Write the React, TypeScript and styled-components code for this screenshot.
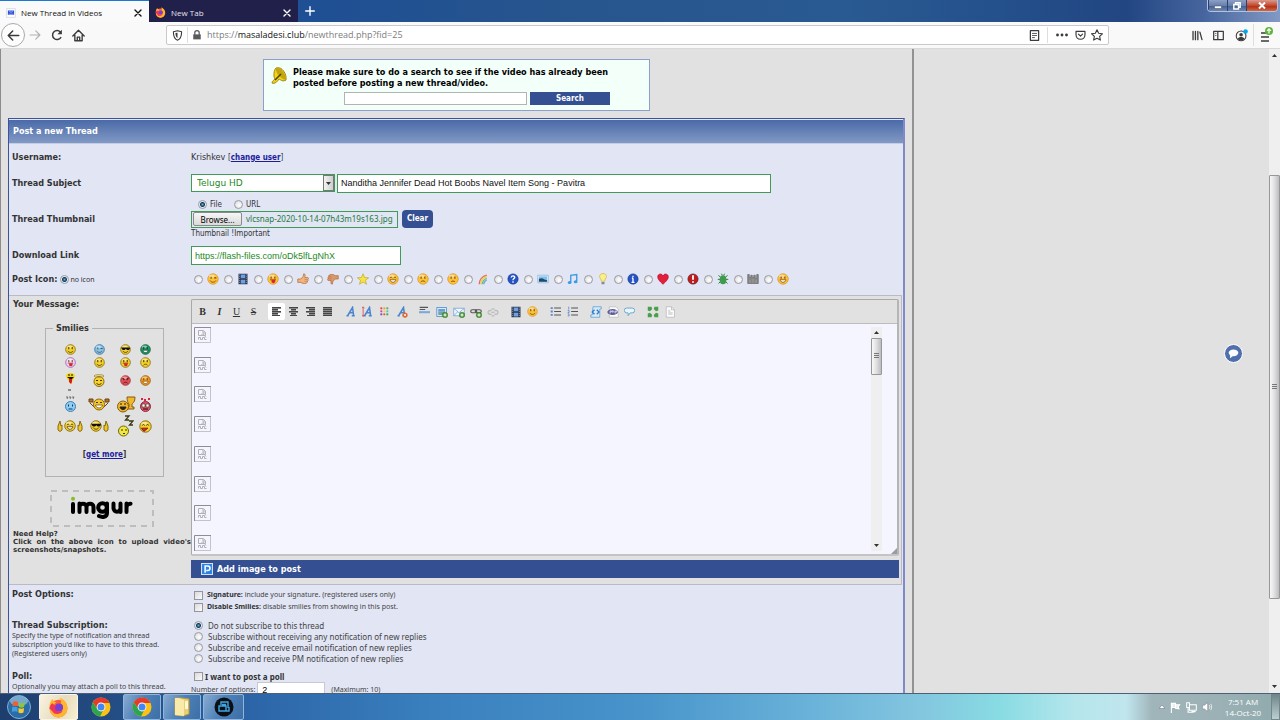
import React from "react";
import styled, { createGlobalStyle, css } from "styled-components";

const verdana = `"DejaVu Sans Condensed", "DejaVu Sans", sans-serif`;
const tahoma = `"Noto Sans", "Open Sans", sans-serif`;
const arial = `"Liberation Sans", Arial, sans-serif`;
const segoe = `"Open Sans", "Noto Sans", sans-serif`;

const GlobalStyle = createGlobalStyle`
  *, *::before, *::after { box-sizing: border-box; }
  body { margin: 0; background: #e1e1e1; }
  button, input, select { font: inherit; margin: 0; }
  svg { display: block; flex: none; }
`;

/* ---------- window frame ---------- */

const Shell = styled.div`
  display: flex;
  flex-direction: column;
  height: 100vh;
  font: 9px/11px ${verdana};
  color: #333;
`;

const TabBar = styled.header`
  flex: none;
  display: flex;
  height: 22px;
  background: linear-gradient(90deg, #22549a 0%, #1f4f94 24%, #27558d 45%, #2a5a92 66%, #24508b 78%, #224682 88%, #46659f 94%, #8299c4 100%);
`;

const Tab = styled.div<{ $active?: boolean }>`
  display: flex;
  align-items: center;
  gap: 5px;
  flex: 0 0 149px;
  padding: 2px 7px 0 6px;
  font: 8px/12px ${segoe};
  color: ${(p) => (p.$active ? "#111" : "#e4e4ee")};
  background: ${(p) => (p.$active ? "#fafafa" : "#21204a")};
  border-top: ${(p) => (p.$active ? "1px solid #1b78d6" : "1px solid #21204a")};
`;

const TabTitle = styled.span`
  flex: 1;
`;

const IconButton = styled.button<{ $w?: number; $color?: string }>`
  display: flex;
  align-items: center;
  justify-content: center;
  flex: none;
  width: ${(p) => p.$w ?? 18}px;
  padding: 0;
  border: 0;
  background: none;
  color: ${(p) => p.$color ?? "#3b3b3d"};
`;

const WindowButtons = styled.div`
  display: flex;
  margin-left: auto;
  margin-right: 2px;
  height: 12px;
  border: 1px solid #b4c3dd;
  border-top: 0;
  border-radius: 0 0 4px 4px;
  overflow: hidden;
`;

const WindowButton = styled.button<{ $close?: boolean }>`
  display: flex;
  align-items: center;
  justify-content: center;
  width: ${(p) => (p.$close ? 31 : 19)}px;
  padding: 0;
  border: 0;
  border-left: 1px solid #2b406c;
  color: #fff;
  background: ${(p) =>
    p.$close
      ? "linear-gradient(#d99a8c, #c4472f 50%, #b53317 60%, #cf6a45)"
      : "linear-gradient(#8d9fc3, #6680b0 50%, #44608f 55%, #6d87b4)"};
`;

const NavBar = styled.nav`
  flex: none;
  display: flex;
  align-items: center;
  height: 27px;
  padding: 0 2px 0 1px;
  background: #f9f9fa;
  border-bottom: 1px solid #d8d8da;
`;

const BackButton = styled(IconButton)`
  height: 24px;
  border: 1px solid #a9a9ab;
  border-radius: 50%;
  background: #fdfdfd;
`;

const NavGroup = styled.div<{ $gap?: number }>`
  display: flex;
  align-items: center;
  gap: ${(p) => p.$gap ?? 0}px;
`;

const AddressBar = styled.div`
  display: flex;
  align-items: center;
  flex: 1;
  height: 20px;
  margin: 0 77px;
  background: #fff;
  border: 1px solid #c9c9cc;
  border-radius: 2px;
`;

const Separator = styled.span<{ $h?: number }>`
  width: 1px;
  height: ${(p) => p.$h ?? 16}px;
  background: #dededf;
`;

const Url = styled.span`
  flex: 1;
  padding-left: 2px;
  font: 9px/14px ${segoe};
  color: #7c7c80;
  b { font-weight: 400; color: #111; }
`;

/* ---------- page ---------- */

const Viewport = styled.div`
  flex: 1;
  min-height: 0;
  display: flex;
  overflow: hidden;
  position: relative;
  background: #e1e1e1;
`;

const Site = styled.main`
  flex: 0 0 71.4%;
  padding: 10px 7px 0 7px;
  border-left: 1px solid #8f8b8d;
  border-right: 2px solid #929292;
`;

const Notice = styled.form`
  width: 387px;
  height: 52px;
  margin: 0 auto 7px;
  padding: 7px 7px 0;
  display: grid;
  grid-template-columns: 22px 1fr;
  align-content: start;
  row-gap: 3px;
  background: #f3fff9;
  border: 1px solid #8ba0cd;
  color: #000;
  font: bold 9px/11px ${verdana};
`;

const SearchLine = styled.div`
  grid-column: 1 / -1;
  display: flex;
  justify-content: center;
  gap: 3px;
  padding-left: 41px;
`;

const SearchInput = styled.input`
  width: 183px;
  height: 13px;
  border: 1px solid #b3b3b3;
  background: #fff;
`;

const SearchButton = styled.button`
  width: 80px;
  height: 13px;
  padding: 0;
  border: 0;
  background: #344f92;
  color: #fff;
  font: bold 8px/12px ${verdana};
`;

const ThreadForm = styled.form`
  border: 1px solid #3e53a0;
  border-width: 1px 2px 0 1px;
  border-right-color: #7f8ac6;
  background: #e1e5f4;
`;

const FormHeader = styled.h1`
  margin: 1px 0 0;
  height: 24px;
  padding: 0 4px;
  color: #fff;
  font: bold 9px/23px ${verdana};
  background: linear-gradient(#4a6aa8, #8299c4);
  border-bottom: 1px solid #c3cde4;
`;

const Row = styled.div<{ $h: number; $top?: boolean }>`
  display: grid;
  grid-template-columns: 179px 1fr;
  align-items: ${(p) => (p.$top ? "start" : "center")};
  min-height: ${(p) => p.$h}px;
  padding: ${(p) => (p.$top ? "4px 0 0 3px" : "0 0 0 3px")};
`;

const Label = styled.label`
  font-weight: bold;
`;

const Hint = styled.p`
  margin: 0;
  font: 7px/9px ${tahoma};
  color: #444;
`;

const Link = styled.a`
  color: #1d1d9c;
  font-weight: bold;
  text-decoration: underline;
`;

const Inline = styled.div<{ $gap?: number }>`
  display: flex;
  align-items: center;
  gap: ${(p) => p.$gap ?? 3}px;
`;

const SourceChoice = styled(Inline)`
  padding-left: 7px;
`;

const Small = styled.span`
  font-size: 8px;
`;

const Tiny = styled.span`
  font: 7px/11px ${tahoma};
`;

const green = css`
  border: 1px solid #3f9b57;
  background: #fff;
  color: #1c8a1c;
`;

const SelectBox = styled.div`
  position: relative;
  width: 144px;
`;

const PrefixSelect = styled.select`
  ${green}
  appearance: none;
  display: block;
  width: 100%;
  height: 18px;
  padding: 0 5px;
  border-radius: 0;
  font: 9px/14px "DejaVu Sans", sans-serif;
`;

const SelectArrow = styled.span`
  position: absolute;
  top: 1px;
  right: 1px;
  bottom: 1px;
  width: 11px;
  display: flex;
  align-items: center;
  justify-content: center;
  border: 1px solid #777;
  background: linear-gradient(90deg, #f2f2f2, #cfcfcf);
  pointer-events: none;
`;

const TextField = styled.input<{ $w: number; $dark?: boolean }>`
  ${green}
  width: ${(p) => p.$w}px;
  height: 19px;
  padding: 0 3px;
  font: 9px/12px ${arial};
  ${(p) => p.$dark && "color: #111;"}
`;

const FilePicker = styled.div`
  display: flex;
  align-items: center;
  gap: 4px;
  width: 207px;
  height: 17px;
  padding-left: 1px;
  white-space: nowrap;
  border: 1px solid #3f9b57;
  color: #1c7a3c;
  font: 8px/12px ${tahoma};
`;

const BrowseButton = styled.button`
  flex: none;
  width: 49px;
  height: 14px;
  padding: 0;
  border: 1px solid #8b8b8b;
  border-radius: 2px;
  background: linear-gradient(#f6f6f6, #dadada);
  color: #000;
  font: 8px/11px ${tahoma};
`;

const ClearButton = styled.button`
  width: 31px;
  height: 18px;
  padding: 0;
  border: 0;
  border-radius: 4px;
  background: #344f92;
  color: #fff;
  font: bold 8px/12px ${verdana};
`;

const Radio = styled.input.attrs({ type: "radio" })`
  appearance: none;
  flex: none;
  width: 9px;
  height: 9px;
  border: 1px solid #9a9ca2;
  border-radius: 50%;
  background: radial-gradient(circle at 60% 60%, #fff, #d5d5d7);
  &:checked {
    background: radial-gradient(circle, #58b4de 0, #12395c 2px, #e8ecf0 3px);
  }
`;

const Checkbox = styled.input.attrs({ type: "checkbox" })`
  appearance: none;
  flex: none;
  width: 9px;
  height: 9px;
  border: 1px solid #94969c;
  background: linear-gradient(135deg, #dadada, #fbfbfb);
`;

const IconPicks = styled.div`
  display: flex;
  padding-left: 3px;
`;

const IconPick = styled.label`
  display: flex;
  align-items: center;
  gap: 4px;
  width: 30px;
`;

/* ---------- message area ---------- */

const MessageRow = styled.section`
  display: grid;
  grid-template-columns: 178px 1fr;
  min-height: 290px;
  padding: 3px 2px 5px 4px;
  margin: 6px 1px 0 0;
  background: #e1e1e1;
  border: 1px solid #b9bac6;
  border-left: 0;
`;

const Side = styled.div`
  display: flex;
  flex-direction: column;
`;

const SmilieSet = styled.fieldset`
  width: 119px;
  height: 154px;
  margin: 13px 0 0 32px;
  padding: 9px 0 0 7px;
  border: 1px solid #b2b2b2;
  legend {
    padding: 0 3px;
    font-weight: bold;
  }
`;

const SmilieGrid = styled.div`
  display: grid;
  grid-template-columns: 34px 24px 29px 11px;
  grid-template-rows: 13px 13px 23px 24px 20px;
  place-items: center;
`;

const GetMore = styled.p`
  margin: 13px 7px 0 0;
  text-align: center;
  font-size: 8px;
`;

const Imgur = styled.a`
  display: flex;
  width: 104px;
  height: 37px;
  margin: 13px 0 3px 37px;
  color: #000;
`;

const Help = styled.p`
  margin: 0;
  width: 178px;
  font: bold 7px/8px "DejaVu Sans", sans-serif;
  text-align: justify;
`;

const Work = styled.div`
  display: flex;
  flex-direction: column;
  gap: 4px;
`;

const Editor = styled.div`
  position: relative;
  border: 1px solid #a9a9a9;
  border-right: 2px solid #b5b5b5;
  border-bottom: 2px solid #c4c4c4;
  border-radius: 2px;
`;

const Toolbar = styled.div`
  display: flex;
  align-items: center;
  gap: 6px;
  height: 24px;
  padding-left: 2px;
  border-bottom: 1px solid #bcbcbc;
`;

const ToolGroup = styled.div`
  display: flex;
`;

const Tool = styled.button<{ $on?: boolean }>`
  display: flex;
  align-items: center;
  justify-content: center;
  width: 17px;
  height: 17px;
  padding: 0;
  border: 0;
  border-radius: 2px;
  background: ${(p) => (p.$on ? "#fff" : "none")};
  color: #333;
  font: bold 10px/12px "Liberation Serif", serif;
  u, s { font-weight: 400; }
`;

const Canvas = styled.div`
  display: flex;
  justify-content: space-between;
  height: 230px;
  padding: 3px 15px 3px 2px;
  background: #f5f5ff;
`;

const Placeholders = styled.div`
  display: flex;
  flex-direction: column;
  justify-content: space-between;
`;

const Grip = styled.span`
  position: absolute;
  right: 0;
  bottom: 0;
`;

const ScrollTrack = styled.div<{ $w: number }>`
  flex: none;
  display: flex;
  flex-direction: column;
  align-items: center;
  width: ${(p) => p.$w}px;
  background: #efefef;
`;

const ScrollArrow = styled.span<{ $h?: number }>`
  display: flex;
  align-items: center;
  height: ${(p) => p.$h ?? 11}px;
`;

const ScrollSpace = styled.span<{ $grow: number }>`
  flex: ${(p) => p.$grow} 1 0;
`;

const ScrollThumb = styled.span<{ $grow: number }>`
  flex: ${(p) => p.$grow} 1 0;
  display: flex;
  align-items: center;
  justify-content: center;
  width: 100%;
  border: 1px solid #979797;
  border-radius: 1px;
  background: linear-gradient(90deg, #f8f8f8, #e2e2e4 45%, #bdbdc1);
`;

const AddImage = styled.button`
  display: flex;
  align-items: center;
  gap: 4px;
  height: 18px;
  padding: 0 10px;
  border: 0;
  background: #344f92;
  color: #fff;
  font: bold 9px/12px ${verdana};
`;

/* ---------- options ---------- */

const OptionList = styled.div`
  display: flex;
  flex-direction: column;
  padding-left: 3px;
`;

const Option = styled.label<{ $small?: boolean }>`
  display: flex;
  align-items: center;
  gap: ${(p) => (p.$small ? 4 : 5)}px;
  height: ${(p) => (p.$small ? 12 : 11)}px;
  font: ${(p) => (p.$small ? `7px/12px ${tahoma}` : `8px/11px ${tahoma}`)};
  color: #444;
  b { color: #333; }
`;

const PollOption = styled(Option)`
  gap: 2px;
  font: 8px/12px ${tahoma};
`;

const PollCount = styled.div`
  display: flex;
  align-items: flex-start;
  gap: 2px;
  font: 7px/15px ${tahoma};
  color: #444;
  input {
    width: 68px;
    height: 16px;
    padding: 0 4px;
    border: 1px solid #c8c8d0;
    background: #fff;
    font: 9px/14px ${arial};
  }
  span { padding-left: 4px; }
`;

const ChatButton = styled.button`
  position: absolute;
  right: 37px;
  top: 295px;
  display: flex;
  align-items: center;
  justify-content: center;
  width: 19px;
  height: 19px;
  padding: 0;
  border: 1px solid #fff;
  border-radius: 50%;
  background: #4f70ad;
`;

const Spacer = styled.div`
  flex: 1;
`;

/* ---------- task bar ---------- */

const TaskBar = styled.footer`
  flex: none;
  display: flex;
  align-items: stretch;
  height: 27px;
  padding-left: 1px;
  border-top: 1px solid #4c6176;
  background: linear-gradient(90deg, #1e3e6d 0%, #25528c 12%, #2c66a9 20%, #3a80bf 34%, #4894cb 50%, #66afd8 62%, #83c6df 72%, #88dbe3 78%, #b5e6ec 84%, #c0e5ed 88%, #a0b5ba 90%, #9bb1b5 95%, #90aaae 100%);
`;

const TaskButton = styled.button<{ $w: number; $kind?: "active" | "open" }>`
  display: flex;
  align-items: center;
  justify-content: center;
  width: ${(p) => p.$w}px;
  margin-right: 2px;
  padding: 0;
  border: 1px solid transparent;
  border-radius: 2px;
  background: none;
  ${(p) =>
    p.$kind === "active" &&
    "background: linear-gradient(115deg, #faf3de, #e6dcc0 55%, #f7efd0); border-color: #f8f5e8;"}
  ${(p) =>
    p.$kind === "open" &&
    "background: linear-gradient(115deg, #88aad0, #4f82b8 45%, #3d6fa6); border-color: #8fb6dd;"}
`;

const Tray = styled.div`
  display: flex;
  align-items: center;
  gap: 5px;
  margin-left: auto;
`;

const Clock = styled.time`
  width: 46px;
  margin-left: 3px;
  color: #fff;
  text-align: center;
  font: 8px/11px ${segoe};
`;

const ShowDesktop = styled.button`
  align-self: stretch;
  width: 9px;
  padding: 0;
  border: 1px solid #71878c;
  background: linear-gradient(#6f878b, #bccfd0);
`;

/* ---------- drawings ---------- */

type IconProps = { w?: number; h?: number; box?: string; children: React.ReactNode };

const Svg = ({ w = 12, h, box = "0 0 16 16", children }: IconProps) => (
  <svg width={w} height={h ?? w} viewBox={box} fill="none" aria-hidden="true">
    {children}
  </svg>
);

const Line = ({ d, sw = 1.6, c = "currentColor", fill = "none" }: { d: string; sw?: number; c?: string; fill?: string }) => (
  <path d={d} stroke={c} strokeWidth={sw} fill={fill} strokeLinecap="round" strokeLinejoin="round" />
);

const Arrow = ({ up }: { up?: boolean }) => (
  <Svg w={5} h={3} box="0 0 5 3">
    <path d={up ? "M0 3 2.500 0 5 3Z" : "M0 0h5L2.500 3Z"} fill="#333" />
  </Svg>
);

const ThumbLines = () => (
  <Svg w={5} h={6} box="0 0 5 6">
    <path d="M0 .5h5M0 2.500h5M0 4.500h5" stroke="#777" />
  </Svg>
);

const Face = ({ mood, fill = "#fbc23a", edge = "#e0a03a", ink = "#7a4a10", size = 12 }: { mood: string; fill?: string; edge?: string; ink?: string; size?: number }) => (
  <Svg w={size}>
    <circle cx="8" cy="8" r="7" fill={fill} stroke={edge} strokeWidth="1.200" />
    <ellipse cx="6.500" cy="4" rx="4" ry="2" fill="#fff" opacity=".45" />
    {mood === "cool" ? (
      <path d="M1.500 5h13v1.500c-1 3-4.500 3-6 .5-1.500 2.500-5 2.500-6-.5Z" fill="#111" />
    ) : mood === "happy" || mood === "scrunch" ? (
      <path d="m4 7 1.500-2L7 7m2 0 1.500-2L12 7" stroke={ink} />
    ) : mood === "angry" ? (
      <path d="m3.500 4.500 3 2m6-2-3 2M5 7h1m4 0h1" stroke={ink} strokeWidth="1.500" />
    ) : (
      <path d={mood === "wink" ? "M5.500 5v2.500M9.500 6.500h3" : "M5.500 4.500v3M10.500 4.500v3"} stroke={ink} strokeWidth="1.500" />
    )}
    {(mood === "smile" || mood === "wink" || mood === "cool") && <path d="M4 10c2 3 6 3 8 0" stroke={ink} strokeWidth="1.200" />}
    {(mood === "sad" || mood === "angry") && <path d="M5 12c1.500-2 4.500-2 6 0" stroke={ink} strokeWidth="1.200" />}
    {mood === "flat" && <path d="M5.500 11.500c1.500-1 3.500-1 5 0" stroke={ink} strokeWidth="1.200" />}
    {(mood === "grin" || mood === "happy") && <path d="M4 9h8c-1 4.500-7 4.500-8 0Z" fill="#fff" stroke={ink} />}
    {mood === "tongue" && (
      <>
        <path d="M4 9h8" stroke={ink} />
        <path d="M6 9h5v3c-1 2-4 2-5 0Z" fill="#dd2233" />
      </>
    )}
    {mood === "scrunch" && <path d="M3 10h8l-5 4Z" fill="#dd2233" stroke="#7b1111" />}
  </Svg>
);

const Badge = ({ fill, kind }: { fill: string; kind: "q" | "i" | "x" }) => (
  <Svg>
    <circle cx="8" cy="8" r="7" fill={fill} stroke="#1c2a66" strokeOpacity=".5" />
    {kind === "q" && <path d="M5.700 6c.3-3 5-2.500 4.600 0C10 7.500 8 7.500 8 9.500M8 11v2" stroke="#fff" strokeWidth="1.800" />}
    {kind === "i" && <path d="M8 3.500v2m0 1.500v5.500M6.500 7H8M6 12.500h4" stroke="#fff" strokeWidth="1.800" />}
    {kind === "x" && <path d="M8 3v6M8 11v2" stroke="#fff" strokeWidth="2.400" />}
  </Svg>
);

const Film = () => (
  <Svg>
    <path d="M2 1h12v14H2Z" fill="#29364f" />
    <path d="M5 2h6v5H5Zm0 7h6v5H5Z" fill="#6f9fe0" />
    <path d="M3.500 2v12M12.500 2v12" stroke="#b9c8e2" strokeDasharray="1 1.500" />
  </Svg>
);

const Hand = ({ down }: { down?: boolean }) => (
  <Svg>
    <g transform={down ? "rotate(180 8 8)" : undefined}>
      <path d="M1 8h4l3-3 1-4c2 0 2 2 1.500 5H14c1.500 0 1.500 2 .5 2.500.5 1 .3 2-.5 2.500.2 1-.3 2-1 2-.2 1.500-6 1.500-8-.5H1Z" fill={down ? "#d9976a" : "#f0b47c"} stroke="#b3703c" />
      <path d="M10 8.500h4M10 11h3.500" stroke="#b3703c" strokeWidth=".7" />
    </g>
  </Svg>
);

const Rainbow = () => (
  <Svg>
    <path d="M3 15C3 9 7 4 13 3" stroke="#e86a6a" strokeWidth="1.800" />
    <path d="M5 15C5 10 8 6 13 5" stroke="#f0d24a" strokeWidth="1.800" />
    <path d="M7 15c0-4 2-6 6-8" stroke="#6cc36c" strokeWidth="1.800" />
    <path d="M9 15c0-3 1-4 4-6" stroke="#6fa4e8" strokeWidth="1.800" />
  </Svg>
);

const Picture = () => (
  <Svg>
    <path d="M1 3h14v10H1Z" fill="#eaf4fc" stroke="#8ab4d6" />
    <path d="M2.500 4.500h11v7h-11Z" fill="#7fc0ea" />
    <path d="M2.500 7.500 7 7l3 1.500 3.500 1v2h-11Z" fill="#1f4a70" />
  </Svg>
);

const postIcons: { name: string; icon: React.ReactNode }[] = [
  { name: "Wink", icon: <Face mood="wink" /> },
  { name: "Video", icon: <Film /> },
  { name: "Tongue", icon: <Face mood="tongue" /> },
  { name: "Thumbs Up", icon: <Hand /> },
  { name: "Thumbs Down", icon: <Hand down /> },
  {
    name: "Star",
    icon: (
      <Svg>
        <path d="m8 1 2 5 5.500.3-4.300 3.400L12.700 15 8 12l-4.700 3 1.500-5.300L.5 6.300 6 6Z" fill="#f6e34b" stroke="#c4ad24" />
      </Svg>
    ),
  },
  { name: "Smile", icon: <Face mood="happy" /> },
  { name: "Sad", icon: <Face mood="sad" /> },
  { name: "Sick", icon: <Face mood="flat" /> },
  { name: "Rainbow", icon: <Rainbow /> },
  { name: "Question", icon: <Badge kind="q" fill="#2353c4" /> },
  { name: "Photo", icon: <Picture /> },
  {
    name: "Music",
    icon: (
      <Svg>
        <path d="M5 12V3l8-1v9" stroke="#3b9be0" strokeWidth="1.800" />
        <ellipse cx="3.500" cy="12.500" rx="2.500" ry="2" fill="#3b9be0" />
        <ellipse cx="11.500" cy="11.500" rx="2.500" ry="2" fill="#3b9be0" />
      </Svg>
    ),
  },
  {
    name: "Lightbulb",
    icon: (
      <Svg>
        <path d="M8 .7c5 0 5.500 5 3 7.300L10 11H6L5 8C2.500 5.700 3 .7 8 .7Z" fill="#fbef8c" stroke="#cfb64a" />
        <path d="M6 12h4v3H6Z" fill="#8b8b8b" />
      </Svg>
    ),
  },
  { name: "Information", icon: <Badge kind="i" fill="#2353c4" /> },
  {
    name: "Heart",
    icon: (
      <Svg>
        <path d="M8 15C3 10.500 1 8 1 5c0-4 5.500-5 7-1 1.500-4 7-3 7 1 0 3-2 5.500-7 10Z" fill="#e3203c" stroke="#b3142c" />
      </Svg>
    ),
  },
  { name: "Exclamation", icon: <Badge kind="x" fill="#c01c1c" /> },
  {
    name: "Bug",
    icon: (
      <Svg>
        <path d="m2 3 3 3m9-3-3 3M1 8.500h4m10 0h-4M2 14l3-3m9 3-3-3M6 1l1 2m3-2L9 3" stroke="#2a7a38" strokeWidth="1.300" />
        <ellipse cx="8" cy="9" rx="4.500" ry="6" fill="#3e9a4c" />
      </Svg>
    ),
  },
  {
    name: "Brick",
    icon: (
      <Svg>
        <path d="M1 2h2v4h2V3h2v3h2V3h2v4h2V2h2v12H1Z" fill="#858585" stroke="#6d6d6d" />
        <path d="M4 9v4M8 8v5M12 9v4" stroke="#aaa" />
      </Svg>
    ),
  },
  { name: "Biggrin", icon: <Face mood="grin" /> },
];

const Align = ({ rows }: { rows: [number, number][] }) => (
  <Svg w={9} h={9} box="0 0 9 9">
    {rows.map(([x, w], i) => (
      <React.Fragment key={i}>
        <rect x={x} y={i * 2} width={w} height="1" fill="#444" />
        {i < 4 && <rect x={x} y={i * 2 + 1} width={w} height="1" fill="#8a8a8a" />}
      </React.Fragment>
    ))}
  </Svg>
);

const LetterA = ({ children, c = "#4a86cf" }: { children?: React.ReactNode; c?: string }) => (
  <Svg>
    <path d="M2 13h3m4 0h4M3.500 13 10 2l1.500 11M6 9h5" stroke={c} strokeWidth="2.100" />
    {children}
  </Svg>
);

const Plus = () => (
  <>
    <circle cx="12" cy="12" r="3.700" fill="#4f9a3c" stroke="#2f6e22" strokeWidth=".6" />
    <path d="M12 10v4M10 12h4" stroke="#fff" strokeWidth="1.300" />
  </>
);

const List = ({ numbered }: { numbered?: boolean }) => (
  <Svg w={11}>
    <path d="M6 3h10M6 8h10M6 13h10" stroke="#555" strokeWidth="1.500" />
    {numbered ? (
      <path d="M2.500 1v4M1 6.500h2v3H1m0 2h2v3H1" stroke="#4f7fc4" strokeWidth="1.100" />
    ) : (
      <path d="M1 3h3M1 8h3M1 13h3" stroke="#5f86c4" strokeWidth="2.600" />
    )}
  </Svg>
);

const dots = ["#e04040", "#f0a030", "#50b050", "#d040a0", "#f4d040", "#50c0c0", "#8040c0", "#e06030", "#40a060"];

const tools: { name: string; on?: boolean; icon: React.ReactNode }[][] = [
  [
    { name: "Bold", icon: "B" },
    { name: "Italic", icon: <i>I</i> },
    { name: "Underline", icon: <u>U</u> },
    { name: "Strikethrough", icon: <s>S</s> },
  ],
  [
    { name: "Align left", on: true, icon: <Align rows={[[0, 9], [0, 6], [0, 9], [0, 6], [0, 8]]} /> },
    { name: "Center", icon: <Align rows={[[0, 9], [2, 5], [0, 9], [2, 5], [1, 7]]} /> },
    { name: "Align right", icon: <Align rows={[[0, 9], [3, 6], [0, 9], [3, 6], [1, 8]]} /> },
    { name: "Justify", icon: <Align rows={[[0, 9], [0, 9], [0, 9], [0, 9], [0, 9]]} /> },
  ],
  [
    { name: "Font name", icon: <LetterA /> },
    { name: "Font size", icon: <LetterA><path d="M1.500 2v11M0 3l1.500-2L3 3M0 12l1.500 2L3 12" stroke="#d43c3c" /></LetterA> },
    {
      name: "Font color",
      icon: (
        <Svg w={9} box="0 0 12 12">
          {dots.map((c, i) => (
            <rect key={c} x={(i % 3) * 4 + 0.5} y={Math.floor(i / 3) * 4 + 0.5} width="2.500" height="2.500" fill={c} />
          ))}
        </Svg>
      ),
    },
    {
      name: "Remove formatting",
      icon: (
        <LetterA>
          <circle cx="12" cy="12" r="3.500" fill="#e0652a" />
          <path d="m10.500 10.500 3 3m0-3-3 3" stroke="#fff" />
        </LetterA>
      ),
    },
  ],
  [
    {
      name: "Horizontal rule",
      icon: (
        <Svg w={11}>
          <path d="M1 2h12M1 5h8" stroke="#555" strokeWidth="1.500" />
          <path d="M0 7.500h16v3H0Z" fill="#78a9de" />
        </Svg>
      ),
    },
    {
      name: "Image",
      icon: (
        <Svg>
          <path d="M1 2h13v12H1Z" fill="#dbebfa" stroke="#4584c4" />
          <path d="M3 4h9v3H3Z" fill="#5aa2e0" />
          <path d="M3 7h9v5H3Z" fill="#78a0a8" />
          <Plus />
        </Svg>
      ),
    },
    {
      name: "Email",
      icon: (
        <Svg>
          <path d="M1 3h14v10H1Z" fill="#f2f8fe" stroke="#6d9fd4" />
          <path d="m1 3 7 6 7-6M1 13l5-5m9 5-5-5" stroke="#6d9fd4" />
          <Plus />
        </Svg>
      ),
    },
    {
      name: "Link",
      icon: (
        <Svg>
          <rect x="1" y="5" width="8" height="4" rx="2" stroke="#555" strokeWidth="1.600" />
          <rect x="7" y="5" width="8" height="4" rx="2" stroke="#555" strokeWidth="1.600" />
          <Plus />
        </Svg>
      ),
    },
    {
      name: "Unlink",
      icon: (
        <Svg>
          <path d="M6 6H4a2 2 0 0 0 0 5h2m4-5h2a2 2 0 0 1 0 5h-2M7 3v2m2-2v2M7 12v2m2-2v2M6 8.500h4" stroke="#bdbdbd" strokeWidth="1.700" />
        </Svg>
      ),
    },
  ],
  [
    { name: "Video", icon: <Film /> },
    { name: "Smilie", icon: <Face mood="smile" size={11} /> },
  ],
  [
    { name: "Bullet list", icon: <List /> },
    { name: "Ordered list", icon: <List numbered /> },
  ],
  [
    {
      name: "Code",
      icon: (
        <Svg>
          <path d="M4 1h11v3h-2v11H1v-3h2Z" fill="#d7ebfb" stroke="#5a9ad4" />
          <path d="m6 5-3 3 3 3m3-6 3 3-3 3" stroke="#2f78c4" strokeWidth="1.700" />
        </Svg>
      ),
    },
    {
      name: "PHP",
      icon: (
        <Svg>
          <path d="M3 1h9l3 3v11H3Z" fill="#fafafa" stroke="#bbb" />
          <ellipse cx="7.500" cy="8" rx="7" ry="4" fill="#5a5a9c" />
          <path d="M4 10V6.500h2V8H4M7.500 5.500v3.500M7.500 7h2v2M11 10V6.500h2V8h-2" stroke="#fff" strokeWidth=".8" />
        </Svg>
      ),
    },
    {
      name: "Quote",
      icon: (
        <Svg w={11}>
          <path d="M4 3h8a3 3 0 0 1 0 7H9l-3 4v-4H4a3 3 0 0 1 0-7Z" fill="#eaf5fc" stroke="#68a6cc" strokeWidth="1.400" />
        </Svg>
      ),
    },
  ],
  [
    {
      name: "Maximize",
      icon: (
        <Svg>
          <path d="M1 1h5l1 3-3 3-3-1Zm14 0h-5L9 4l3 3 3-1ZM1 15h5l1-3-3-3-3 1Zm14 0h-5l-1-3 3-3 3 1Z" fill="#4aa04a" />
        </Svg>
      ),
    },
    {
      name: "Source",
      icon: (
        <Svg>
          <path d="M3 1h7l4 4v10H3Z" fill="#fcfcfc" stroke="#b5b5b5" />
          <path d="M10 1v4h4" stroke="#b5b5b5" />
          <path d="M5.500 5h3v3h3v4h-6Z" fill="#dcdcdc" />
        </Svg>
      ),
    },
  ],
];

const Yellow = (p: { mood: string; size?: number }) => <Face fill="#f3d32b" edge="#8a6a10" ink="#4a3008" size={11} {...p} />;

const Fists = ({ both, mood }: { both?: boolean; mood: string }) => (
  <Inline $gap={1}>
    {both && (
      <Svg w={6} h={11} box="0 0 6 11">
        <path d="M3 0 1 5v4l2 1.500L5 9V4L4 5Z" fill="#eec52c" stroke="#8a6a10" />
      </Svg>
    )}
    <Yellow mood={mood} size={12} />
    <Svg w={6} h={11} box="0 0 6 11">
      <path d="m3 0 2 5v4l-2 1.500L1 9V4l1 1Z" fill="#eec52c" stroke="#8a6a10" />
    </Svg>
  </Inline>
);

const smilies: React.ReactNode[] = [
  <Yellow mood="smile" />,
  <Face mood="wink" fill="#7fc4f0" edge="#2f6ea8" size={11} />,
  <Yellow mood="cool" />,
  <Face mood="grin" fill="#1f9a66" edge="#0c5a3a" ink="#0c3a28" size={11} />,
  <Face mood="tongue" fill="#f0d4f4" edge="#a05ab0" size={11} />,
  <Yellow mood="smile" />,
  <Yellow mood="tongue" />,
  <Yellow mood="sad" />,
  <Svg w={9} h={20} box="0 0 9 20">
    <path d="M0 5c0-4 9-4 9 0L7 9l-2 4L2 9Z" fill="#f5d800" />
    <path d="M3 3v2m3-2v2" stroke="#111" />
    <path d="M1 6h7L5 9Z" fill="#111" />
    <path d="M3 8h3v3l-1 2-2-2Z" fill="#e01818" />
    <path d="M2 19h3" stroke="#333" />
  </Svg>,
  <Svg w={12} h={13} box="0 0 12 13">
    <circle cx="6" cy="7.500" r="5" fill="#f3d32b" stroke="#8a6a10" />
    <ellipse cx="6" cy="2" rx="5" ry="1.300" stroke="#b5952b" />
    <path d="M3 6.500h2m2 0h2M3.500 9c1 2 4 2 5 0" stroke="#55320a" />
  </Svg>,
  <Face mood="angry" fill="#e05058" edge="#a03038" ink="#4a0f0f" size={11} />,
  <Face mood="grin" fill="#f09a1c" edge="#9a5208" size={11} />,
  <Svg w={11} h={16} box="0 0 11 16">
    <circle cx="5.500" cy="10.500" r="5" fill="#8fcdf2" stroke="#3b7eb8" />
    <path d="M3.500 8.500v2m4-2v2M3.500 13h4" stroke="#123a60" />
    <path d="M1 1h2L2 3m2-2h2L5 3m2-2h2L8 3" stroke="#555" strokeWidth=".8" />
  </Svg>,
  <Svg w={22} h={14} box="0 0 22 14">
    <path d="M1 2h4v3H1Zm16 0h4v3h-4ZM2 6l4 4M20 6l-4 4" fill="#b8741c" stroke="#6e400c" />
    <circle cx="11" cy="7.500" r="5.500" fill="#f3c82b" stroke="#8a6a10" />
    <path d="M8 5.500h2m2 0h2" stroke="#55320a" />
    <path d="M7.500 8h7c-1 4-6 4-7 0Z" fill="#fff" stroke="#6e3e08" strokeWidth=".7" />
  </Svg>,
  <Svg w={20} h={17} box="0 0 20 17">
    <path d="M11 1h8c0 5-2 6-3 7v3h2v2h-7v-2h2V8c-1-1-2-3-2-7Z" fill="#eeb92b" stroke="#8a5a10" />
    <circle cx="7" cy="10.500" r="5.500" fill="#eeb92b" stroke="#8a5a10" />
    <path d="M4 8h2m2 0h2M4 11h6c-1 3.500-5 3.500-6 0Z" fill="#222" stroke="#222" />
  </Svg>,
  <Svg w={11} h={15} box="0 0 11 15">
    <circle cx="5.500" cy="9.500" r="5" fill="#e05868" stroke="#8d2838" />
    <path d="M2 7h3v3H2Zm4 0h3v3H6Z" fill="#fff" stroke="#333" strokeWidth=".6" />
    <path d="M1 1h2v2H1Zm3 1h2v2H4Zm4-1h2v2H8Z" fill="#e02040" />
    <path d="M3 12h5" stroke="#300" />
  </Svg>,
  <Fists both mood="happy" />,
  <Fists mood="cool" />,
  <Svg w={16} h={22} box="0 0 16 22">
    <circle cx="5.500" cy="16" r="5" fill="#f0e83a" stroke="#6e6a10" />
    <path d="M3 15h2m2 0h2M5 18.500h2" stroke="#333" />
    <path d="M7 1h4L7.500 5H11M11 6h4l-3.500 4H15" stroke="#3a3a12" strokeWidth="1.300" />
  </Svg>,
  <Yellow mood="scrunch" size={13} />,
];

const Placeholder = () => (
  <Svg w={17} h={16} box="0 0 17 16">
    <path d="M16.500 0v15.500H0" stroke="#c4c4c8" />
    <path d="M.5 16V.5H17" stroke="#8d8d92" />
    <path d="M4.500 3.500h5l2 2v3h-7ZM9 4v2h3M4.500 12.500v-2h2v2h2v-2h2v2h2M7 8.500l2-2 3 4" stroke="#b0b0b5" />
  </Svg>
);

const Flame = ({ size }: { size: number }) => (
  <Svg w={size} box="0 0 20 20">
    <circle cx="10" cy="11" r="8.500" fill="#ff5a36" />
    <path d="M1.500 11C1 6 3 4 4 2c1 2 2 2.500 4 3-2 1.500-3 3-2 6 1 4 7 4 8 0 .5-3-1-4-2-5 1-2 0-4-1-5 5 1 8 6 7.500 10a8.500 8.500 0 0 1-17 0Z" fill="#ffb52c" />
    <path d="M1.500 11c.3-3 1.500-4 2.500-5 1 1 2 1.500 3 2-1 5 3 7 7 5-2 4-8 4-9.500 1Z" fill="#f0345c" />
    <circle cx="10.500" cy="10" r="3.800" fill="#7a3fd0" />
  </Svg>
);

const ChromeLogo = () => (
  <Svg w={20} box="0 0 20 20">
    <circle cx="10" cy="10" r="9.500" fill="#fbc116" />
    <path d="M1.800 5.200a9.500 9.500 0 0 1 16.400 0L18.200 6H10a4 4 0 0 0-3.500 6Z" fill="#e33b2e" />
    <path d="M1.800 5.200 6.500 12A4 4 0 0 0 12 13.500l-3 6A9.500 9.500 0 0 1 1.800 5.200Z" fill="#2da44e" />
    <circle cx="10" cy="10" r="4.400" fill="#fff" />
    <circle cx="10" cy="10" r="3.500" fill="#4285f4" />
  </Svg>
);

const Close = () => (
  <Svg w={8} box="0 0 8 8">
    <Line d="M1 1l6 6M7 1 1 7" sw={1.4} />
  </Svg>
);

const subscriptions = [
  "Do not subscribe to this thread",
  "Subscribe without receiving any notification of new replies",
  "Subscribe and receive email notification of new replies",
  "Subscribe and receive PM notification of new replies",
];

/* ---------- sections ---------- */

const Browser = () => (
  <>
    <TabBar>
      <Tab $active>
        <Svg w={10}>
          <path d="M1 1h14v14H1Z" fill="#fff" stroke="#c8ccd8" />
          <path d="M3 4h10v7H3Z" fill="#2d4fe0" />
          <path d="m5 5 3 2 3-2M4 10h8" stroke="#cfd8ff" />
        </Svg>
        <TabTitle>New Thread in Videos</TabTitle>
        <IconButton $w={8} $color="#111" aria-label="Close tab"><Close /></IconButton>
      </Tab>
      <Tab>
        <Flame size={11} />
        <TabTitle>New Tab</TabTitle>
        <IconButton $w={8} $color="#fff" aria-label="Close tab"><Close /></IconButton>
      </Tab>
      <IconButton $w={24} $color="#fff" aria-label="Open a new tab">
        <Svg w={10} box="0 0 10 10"><Line d="M5 .7v8.600M.7 5h8.600" sw={1.4} /></Svg>
      </IconButton>
      <WindowButtons>
        <WindowButton type="button" aria-label="Minimize">
          <Svg w={8} h={6} box="0 0 8 6"><path d="M.5 3h7v2.500h-7Z" fill="#fff" stroke="#445" strokeWidth=".5" /></Svg>
        </WindowButton>
        <WindowButton type="button" aria-label="Restore">
          <Svg w={8} box="0 0 8 8"><path d="M2.500 2V.8h4.700v4.500H6M.8 2.500h4.700V7H.8Z" stroke="#fff" strokeWidth="1.400" /></Svg>
        </WindowButton>
        <WindowButton type="button" $close aria-label="Close">
          <Svg w={8} h={7} box="0 0 8 7"><path d="m1 .5 6 6m0-6-6 6" stroke="#fff" strokeWidth="2" /></Svg>
        </WindowButton>
      </WindowButtons>
    </TabBar>
    <NavBar>
      <NavGroup>
        <BackButton $w={24} aria-label="Back"><Svg w={13}><Line d="M14.500 8h-13M7 2.500 1.500 8 7 13.500" sw={1.8} /></Svg></BackButton>
        <IconButton $w={20} $color="#b1b1b3" aria-label="Forward"><Svg w={12}><Line d="M1.500 8h13M9 2.500 14.500 8 9 13.500" /></Svg></IconButton>
        <IconButton $w={23} aria-label="Reload">
          <Svg><Line d="M13 11.500A6 6 0 1 1 12.500 4" sw={2} /><path d="M14.500 1v6h-6Z" fill="currentColor" /></Svg>
        </IconButton>
        <IconButton $w={21} aria-label="Home">
          <Svg w={13}><Line d="M1 8.500 8 1.500l7 7M3.500 7.500v7h9v-7M6.500 14v-4h3v4" sw={1.7} /></Svg>
        </IconButton>
      </NavGroup>
      <AddressBar>
        <IconButton $w={20} aria-label="Tracking protection">
          <Svg w={11}><Line d="M8 1 2 2.500C2 9 3.500 13 8 15c4.500-2 6-6 6-12.500Z" /><path d="M8 4v8c-2-1.500-3-4-3-7.500Z" fill="currentColor" /></Svg>
        </IconButton>
        <Separator />
        <IconButton $w={17} $color="#5a5a5c" aria-label="Connection secure">
          <Svg w={10}><path d="M2 7h12v8H2Z" fill="currentColor" /><Line d="M4.500 7V4.500a3.500 3.500 0 0 1 7 0V7" sw={2} /></Svg>
        </IconButton>
        <Url>https://<b>masaladesi.club</b>/newthread.php?fid=25</Url>
        <IconButton $w={26} aria-label="Reader view">
          <Svg w={11}><Line d="M2 1h12v14H2Z" sw={1.8} /><Line d="M5 5h6M5 8h6M5 11h3" sw={1.2} /></Svg>
        </IconButton>
        <Separator />
        <IconButton $w={27} aria-label="Page actions">
          <Svg><circle cx="2" cy="8" r="1.900" fill="currentColor" /><circle cx="8" cy="8" r="1.900" fill="currentColor" /><circle cx="14" cy="8" r="1.900" fill="currentColor" /></Svg>
        </IconButton>
        <IconButton $w={11} aria-label="Save to Pocket">
          <Svg w={11}><Line d="M1.500 2h13v5a6.500 6.500 0 0 1-13 0ZM5 6l3 3 3-3" sw={1.7} /></Svg>
        </IconButton>
        <IconButton $w={22} aria-label="Bookmark">
          <Svg><Line d="m8 1 2.200 4.700 5 .6-3.700 3.500 1 5L8 12.400 3.500 14.800l1-5L.8 6.300l5-.6Z" sw={1.5} /></Svg>
        </IconButton>
      </AddressBar>
      <NavGroup>
        <IconButton $w={22} aria-label="Library"><Svg w={11}><Line d="M1.500 2v12M5 2v12M8.500 2v12M11.500 3l3 11" sw={1.9} /></Svg></IconButton>
        <IconButton $w={21} aria-label="Sidebars"><Svg w={11}><Line d="M1 2h14v12H1ZM7 2v12" sw={1.8} /><Line d="M3.500 5h1M3.500 8h1" sw={1} /></Svg></IconButton>
        <IconButton $w={24} aria-label="Account">
          <Svg w={13}>
            <circle cx="7.500" cy="8.500" r="6" stroke="currentColor" strokeWidth="1.300" />
            <circle cx="7.500" cy="7" r="2.200" fill="currentColor" />
            <path d="M3.500 12c1-3 7-3 8 0-2 2.500-6 2.500-8 0Z" fill="currentColor" />
            <circle cx="13" cy="3" r="2.800" fill="#00a8f0" />
          </Svg>
        </IconButton>
        <Separator $h={22} />
        <IconButton $w={24} aria-label="Menu">
          <Svg w={14} h={18} box="0 0 14 18">
            <path d="M2 7h8M2 11h8M2 15h8" stroke="currentColor" strokeWidth="1.400" />
            <circle cx="10" cy="5" r="4" fill="#5fb53a" />
            <path d="M10 7.500V3M8 4.800 10 2.800l2 2" stroke="#fff" strokeWidth="1.200" />
          </Svg>
        </IconButton>
      </NavGroup>
    </NavBar>
  </>
);

const MessageSection = () => (
  <MessageRow>
    <Side>
      <Label as="span">Your Message:</Label>
      <SmilieSet>
        <legend>Smilies</legend>
        <SmilieGrid>{smilies.map((s, i) => <React.Fragment key={i}>{s}</React.Fragment>)}</SmilieGrid>
        <GetMore><b>[</b><Link href="#smilies">get more</Link><b>]</b></GetMore>
      </SmilieSet>
      <Imgur href="#imgur" aria-label="imgur">
        <svg width="104" height="37" viewBox="0 0 104 37">
          <rect x="1" y="1" width="102" height="35" fill="none" stroke="#bdbdbd" strokeWidth="2" strokeDasharray="6 5" />
          <g fill="none" stroke="#000" strokeWidth="4" strokeLinecap="round" strokeLinejoin="round">
            <path d="M23 14v8" />
            <path d="M29.500 22v-8.500M29.500 17c0-4.500 7-4.500 7 0v5M36.500 17c0-4.500 7-4.500 7 0v5" />
            <circle cx="52.500" cy="17.500" r="4.300" />
            <path d="M57 13.500V23c0 4.500-5 4.500-8 3" />
            <path d="M63.500 13.500V18c0 5 7 5 7 0v-4.500M70.500 14v8" />
            <path d="M76.500 22v-8.500M76.500 18c0-3 2-4.500 4-4.300" />
          </g>
          <circle cx="23" cy="8.800" r="2" fill="#85bf25" />
        </svg>
      </Imgur>
      <Help>Need Help?<br />Click on the above icon to upload video's screenshots/snapshots.</Help>
    </Side>
    <Work>
      <Editor>
        <Toolbar>
          {tools.map((group, g) => (
            <ToolGroup key={g}>
              {group.map((t) => (
                <Tool key={t.name} type="button" $on={t.on} aria-label={t.name}>{t.icon}</Tool>
              ))}
            </ToolGroup>
          ))}
        </Toolbar>
        <Canvas role="textbox" aria-label="Your Message">
          <Placeholders>
            {Array.from({ length: 8 }, (_, i) => <Placeholder key={i} />)}
          </Placeholders>
          <ScrollTrack $w={11}>
            <ScrollArrow><Arrow up /></ScrollArrow>
            <ScrollThumb $grow={35}><ThumbLines /></ScrollThumb>
            <ScrollSpace $grow={167} />
            <ScrollArrow><Arrow /></ScrollArrow>
          </ScrollTrack>
        </Canvas>
        <Grip><Svg w={6} box="0 0 6 6"><path d="M6 0v6H0Z" fill="#9a9aa4" /></Svg></Grip>
      </Editor>
      <AddImage type="button">
        <Svg w={12}>
          <path d="M.7.7h14.600v14.600H.7Z" fill="#2f83e0" stroke="#cfe2fa" strokeWidth="1.400" />
          <path d="M5.500 13V4h3.500a3 3 0 0 1 0 6H7" stroke="#fff" strokeWidth="2" />
        </Svg>
        Add image to post
      </AddImage>
    </Work>
  </MessageRow>
);

export default function App() {
  return (
    <Shell>
      <GlobalStyle />
      <Browser />
      <Viewport>
        <Site>
          <Notice onSubmit={(e) => e.preventDefault()}>
            <Svg w={16} h={18} box="0 0 16 18">
              <path d="M5 1c6-2 11 6 10 12-3 2-5 0-7-1-2 3-4 5-7 4 0-2 2-3 3-4C2 9 3 3 5 1Z" fill="#f2d416" stroke="#a08810" />
              <path d="M5 1c-1 5 5 11 10 12C15 7 10 0 5 1Z" fill="#c2a410" />
              <path d="m4 13 6-6" stroke="#4c400a" strokeWidth="1.500" />
            </Svg>
            <span>
              Please make sure to do a search to see if the video has already been posted before posting a new thread/video.
            </span>
            <SearchLine>
              <SearchInput aria-label="Search videos" />
              <SearchButton type="submit">Search</SearchButton>
            </SearchLine>
          </Notice>

          <ThreadForm onSubmit={(e) => e.preventDefault()}>
            <FormHeader>Post a new Thread</FormHeader>
            <Row $h={26}>
              <Label as="span">Username:</Label>
              <span>Krishkev <Small>[<Link href="#change">change user</Link>]</Small></span>
            </Row>
            <Row $h={26}>
              <Label htmlFor="subject">Thread Subject</Label>
              <Inline $gap={2}>
                <SelectBox>
                  <PrefixSelect aria-label="Prefix" defaultValue="Telugu HD"><option>Telugu HD</option></PrefixSelect>
                  <SelectArrow><Arrow /></SelectArrow>
                </SelectBox>
                <TextField id="subject" $w={434} $dark defaultValue="Nanditha Jennifer Dead Hot Boobs Navel Item Song - Pavitra" />
              </Inline>
            </Row>
            <Row $h={46}>
              <Label htmlFor="browse">Thread Thumbnail</Label>
              <div>
                <SourceChoice $gap={12}>
                  <Inline as="label"><Radio name="source" defaultChecked /><Small>File</Small></Inline>
                  <Inline as="label"><Radio name="source" /><Small>URL</Small></Inline>
                </SourceChoice>
                <Inline $gap={4}>
                  <FilePicker>
                    <BrowseButton id="browse" type="button">Browse...</BrowseButton>
                    <span>vlcsnap-2020-10-14-07h43m19s163.jpg</span>
                  </FilePicker>
                  <ClearButton type="button">Clear</ClearButton>
                </Inline>
                <Small>Thumbnail !Important</Small>
              </div>
            </Row>
            <Row $h={27}>
              <Label htmlFor="link">Download Link</Label>
              <TextField id="link" $w={210} defaultValue="https://flash-files.com/oDk5lfLgNhX" />
            </Row>
            <Row $h={20}>
              <Inline>
                <Label as="span">Post Icon:</Label>
                <Inline as="label" $gap={1}><Radio name="icon" defaultChecked /><Tiny>no icon</Tiny></Inline>
              </Inline>
              <IconPicks>
                {postIcons.map((p) => (
                  <IconPick key={p.name}><Radio name="icon" aria-label={p.name} />{p.icon}</IconPick>
                ))}
              </IconPicks>
            </Row>

            <MessageSection />

            <Row $h={31} $top>
              <Label as="span">Post Options:</Label>
              <OptionList>
                <Option $small><Checkbox /><span><b>Signature:</b> include your signature. (registered users only)</span></Option>
                <Option $small><Checkbox /><span><b>Disable Smilies:</b> disable smilies from showing in this post.</span></Option>
              </OptionList>
            </Row>
            <Row $h={51} $top>
              <div>
                <Label as="span">Thread Subscription:</Label>
                <Hint>
                  Specify the type of notification and thread<br />
                  subscription you'd like to have to this thread.<br />
                  (Registered users only)
                </Hint>
              </div>
              <OptionList>
                {subscriptions.map((s, i) => (
                  <Option key={s}><Radio name="subscription" defaultChecked={i === 0} />{s}</Option>
                ))}
              </OptionList>
            </Row>
            <Row $h={40} $top>
              <div>
                <Label as="span">Poll:</Label>
                <Hint>Optionally you may attach a poll to this thread.</Hint>
              </div>
              <div>
                <OptionList>
                  <PollOption><Checkbox /><b>I want to post a poll</b></PollOption>
                </OptionList>
                <PollCount>
                  <label htmlFor="count">Number of options:</label>
                  <input id="count" defaultValue="2" />
                  <span>(Maximum: 10)</span>
                </PollCount>
              </div>
            </Row>
          </ThreadForm>
        </Site>
        <Spacer />
        <ScrollTrack $w={11}>
          <ScrollArrow $h={12}><Arrow up /></ScrollArrow>
          <ScrollSpace $grow={114} />
          <ScrollThumb $grow={424}><ThumbLines /></ScrollThumb>
          <ScrollSpace $grow={82} />
          <ScrollArrow $h={12}><Arrow /></ScrollArrow>
        </ScrollTrack>
        <ChatButton type="button" aria-label="Open chat">
          <Svg w={11}>
            <ellipse cx="8" cy="7" rx="7" ry="5" fill="#fff" />
            <path d="M3 9v6l5-4Z" fill="#fff" />
          </Svg>
        </ChatButton>
      </Viewport>
      <TaskBar>
        <TaskButton $w={36} aria-label="Start">
          <Svg w={24} box="0 0 24 24">
            <circle cx="12" cy="12" r="11.500" fill="#2b6ca6" stroke="#7fb2d8" />
            <ellipse cx="12" cy="6" rx="9" ry="5" fill="#a9cfe8" opacity=".6" />
            <path d="M6 7c2-1 3.500-1 5 0v4.500c-1.500-1-3.500-1-5.500 0Z" fill="#ef6030" />
            <path d="M12 7.500c2 1 4 1 6 0L17 12c-2 1-3.500 1-5 0Z" fill="#8cc63f" />
            <path d="M5 12.500c2-1 4-1 5.500 0V17c-1.500-1-3.500-1-5.500 0Z" fill="#3fa0e0" />
            <path d="M11.500 13c2 1 3.500 1 5.500 0l-.5 4.500c-2 1-3.500 1-5 0Z" fill="#fccb2a" />
          </Svg>
        </TaskButton>
        <TaskButton $w={39} $kind="active" aria-label="Firefox"><Flame size={21} /></TaskButton>
        <TaskButton $w={41} aria-label="Chrome"><ChromeLogo /></TaskButton>
        <TaskButton $w={38} $kind="open" aria-label="Chrome window"><ChromeLogo /></TaskButton>
        <TaskButton $w={38} $kind="open" aria-label="Explorer">
          <Svg w={18} h={20} box="0 0 18 20">
            <path d="M2 1h7l7 1v15l-6 2-8-1Z" fill="#e8cf75" stroke="#b89a42" />
            <path d="M2 1h4l5 2v16l-9-1Z" fill="#f8eaa8" />
            <path d="M12 4h3v8h-3Z" fill="#fff7d0" />
          </Svg>
        </TaskButton>
        <TaskButton $w={41} $kind="open" aria-label="Media tool">
          <Svg w={20} box="0 0 20 20">
            <circle cx="10" cy="10" r="9.500" fill="#0a0f18" />
            <path d="M7 8V5h7v6M5 9h7v5H5Zm0 5h10v-4M8 7.500h4" stroke="#3fa6e0" strokeWidth="1.400" />
          </Svg>
        </TaskButton>
        <Tray>
          <Svg w={6} h={4} box="0 0 6 4"><path d="M0 3.500 3 0l3 3.500Z" fill="#fff" stroke="#667" strokeWidth=".5" /></Svg>
          <Svg w={11}><path d="M2 1v15M3 2h5v6H3ZM8 4h6l-2 3 1 3-5-1Z" stroke="#fff" strokeWidth="1.600" fill="#e8efef" /></Svg>
          <Svg w={11}><path d="M5 4h10v8H5ZM1 1h4v7H1ZM3 8v7h8M8 14h6" stroke="#fff" strokeWidth="1.500" /></Svg>
          <Svg w={10}><path d="M1 5h3l5-4v14l-5-4H1Z" fill="#fff" stroke="#667" strokeWidth=".6" /><path d="M11.500 5c1.500 2 1.500 4 0 6M14 3c2 3 2 7 0 10" stroke="#fff" strokeWidth="1.200" /></Svg>
          <Clock>7:51 AM<br />14-Oct-20</Clock>
          <ShowDesktop aria-label="Show desktop" />
        </Tray>
      </TaskBar>
    </Shell>
  );
}
